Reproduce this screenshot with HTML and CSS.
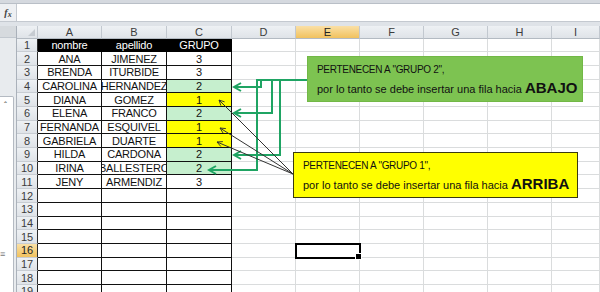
FILE: index.html
```html
<!DOCTYPE html>
<html lang="es">
<head>
  <meta charset="UTF-8">
  <title>Insertar filas por grupo</title>
  <link rel="stylesheet" href="styles.css">
</head>
<body>
<div class="app">
  <div class="ribbon-edge"></div>
  <div class="formula-bar">
    <div class="fx"><i>f</i><span>x</span></div>
    <div class="formula-input"></div>
  </div>
  <div class="bar-gap"></div>

  <div class="sheet">
    <div class="side-pane">
      <div class="side-top"></div>
      <div class="side-thumb"><span class="thumb-arrow">&#710;</span><span class="thumb-grip">&#8801;</span></div>
    </div>

    <div class="grid">
      <div class="ch corner"></div><div class="ch">A</div><div class="ch">B</div><div class="ch">C</div><div class="ch">D</div><div class="ch sel">E</div><div class="ch">F</div><div class="ch">G</div><div class="ch">H</div><div class="ch">I</div>

      <div class="rh">1</div><div class="c d hd">nombre</div><div class="c d hd">apellido</div><div class="c d hd">GRUPO</div><div class="c"></div><div class="c"></div><div class="c"></div><div class="c"></div><div class="c"></div><div class="c"></div>
      <div class="rh">2</div><div class="c d">ANA</div><div class="c d">JIMENEZ</div><div class="c d">3</div><div class="c"></div><div class="c"></div><div class="c"></div><div class="c"></div><div class="c"></div><div class="c"></div>
      <div class="rh">3</div><div class="c d">BRENDA</div><div class="c d">ITURBIDE</div><div class="c d">3</div><div class="c"></div><div class="c"></div><div class="c"></div><div class="c"></div><div class="c"></div><div class="c"></div>
      <div class="rh">4</div><div class="c d">CAROLINA</div><div class="c d">HERNANDEZ</div><div class="c d g">2</div><div class="c"></div><div class="c"></div><div class="c"></div><div class="c"></div><div class="c"></div><div class="c"></div>
      <div class="rh">5</div><div class="c d">DIANA</div><div class="c d">GOMEZ</div><div class="c d y">1</div><div class="c"></div><div class="c"></div><div class="c"></div><div class="c"></div><div class="c"></div><div class="c"></div>
      <div class="rh">6</div><div class="c d">ELENA</div><div class="c d">FRANCO</div><div class="c d g">2</div><div class="c"></div><div class="c"></div><div class="c"></div><div class="c"></div><div class="c"></div><div class="c"></div>
      <div class="rh">7</div><div class="c d">FERNANDA</div><div class="c d">ESQUIVEL</div><div class="c d y">1</div><div class="c"></div><div class="c"></div><div class="c"></div><div class="c"></div><div class="c"></div><div class="c"></div>
      <div class="rh">8</div><div class="c d">GABRIELA</div><div class="c d">DUARTE</div><div class="c d y">1</div><div class="c"></div><div class="c"></div><div class="c"></div><div class="c"></div><div class="c"></div><div class="c"></div>
      <div class="rh">9</div><div class="c d">HILDA</div><div class="c d">CARDONA</div><div class="c d g">2</div><div class="c"></div><div class="c"></div><div class="c"></div><div class="c"></div><div class="c"></div><div class="c"></div>
      <div class="rh">10</div><div class="c d">IRINA</div><div class="c d">BALLESTERO</div><div class="c d g">2</div><div class="c"></div><div class="c"></div><div class="c"></div><div class="c"></div><div class="c"></div><div class="c"></div>
      <div class="rh">11</div><div class="c d">JENY</div><div class="c d">ARMENDIZ</div><div class="c d">3</div><div class="c"></div><div class="c"></div><div class="c"></div><div class="c"></div><div class="c"></div><div class="c"></div>
      <div class="rh">12</div><div class="c d"></div><div class="c d"></div><div class="c d"></div><div class="c"></div><div class="c"></div><div class="c"></div><div class="c"></div><div class="c"></div><div class="c"></div>
      <div class="rh">13</div><div class="c d"></div><div class="c d"></div><div class="c d"></div><div class="c"></div><div class="c"></div><div class="c"></div><div class="c"></div><div class="c"></div><div class="c"></div>
      <div class="rh">14</div><div class="c d"></div><div class="c d"></div><div class="c d"></div><div class="c"></div><div class="c"></div><div class="c"></div><div class="c"></div><div class="c"></div><div class="c"></div>
      <div class="rh">15</div><div class="c d"></div><div class="c d"></div><div class="c d"></div><div class="c"></div><div class="c"></div><div class="c"></div><div class="c"></div><div class="c"></div><div class="c"></div>
      <div class="rh sel">16</div><div class="c d"></div><div class="c d"></div><div class="c d"></div><div class="c"></div><div class="c active"></div><div class="c"></div><div class="c"></div><div class="c"></div><div class="c"></div>
      <div class="rh">17</div><div class="c d"></div><div class="c d"></div><div class="c d"></div><div class="c"></div><div class="c"></div><div class="c"></div><div class="c"></div><div class="c"></div><div class="c"></div>
      <div class="rh">18</div><div class="c d"></div><div class="c d"></div><div class="c d"></div><div class="c"></div><div class="c"></div><div class="c"></div><div class="c"></div><div class="c"></div><div class="c"></div>
      <div class="rh">19</div><div class="c d"></div><div class="c d"></div><div class="c d"></div><div class="c"></div><div class="c"></div><div class="c"></div><div class="c"></div><div class="c"></div><div class="c"></div>
    </div>
  </div>

  <!-- callouts drawn over the sheet -->
  <div class="callout callout-green">
    <div class="callout-title">PERTENECEN A "GRUPO 2",</div>
    <div class="callout-body">por lo tanto se debe insertar una fila hacia <b class="callout-strong">ABAJO</b></div>
  </div>
  <div class="callout callout-yellow">
    <div class="callout-title">PERTENECEN A "GRUPO 1",</div>
    <div class="callout-body">por lo tanto se debe insertar una fila hacia <b class="callout-strong">ARRIBA</b></div>
  </div>

  <svg class="connectors" width="600" height="292" viewBox="0 0 600 292">
    <defs>
      <marker id="tipGreen" viewBox="0 0 10 10" refX="8" refY="5" markerWidth="10" markerHeight="10" orient="auto" markerUnits="userSpaceOnUse">
        <path d="M1 1L8 5L1 9" fill="none" stroke="#1fa463" stroke-width="2"/>
      </marker>
      <marker id="tipDark" viewBox="0 0 8 8" refX="7" refY="4" markerWidth="7" markerHeight="7" orient="auto" markerUnits="userSpaceOnUse">
        <path d="M1 1L7 4L1 7" fill="none" stroke="#333" stroke-width="1"/>
      </marker>
    </defs>
    <g fill="none" stroke="#1fa463" stroke-width="2" marker-end="url(#tipGreen)">
      <path d="M307 80H257V170H209"/>
      <path d="M261 80V87H234"/>
      <path d="M272 80V113H234"/>
      <path d="M280 80V155H234"/>
    </g>
    <g fill="none" stroke="#333" stroke-width="1" marker-end="url(#tipDark)">
      <path d="M293 174L219 100"/>
      <path d="M293 174L220 128"/>
      <path d="M293 174L217 142"/>
    </g>
  </svg>
</div>
</body>
</html>
```

FILE: styles.css
```css
* {
  margin: 0;
  padding: 0;
  box-sizing: border-box;
}

body {
  font-family: "Liberation Sans", Arial, sans-serif;
  background: #fff;
}

.app {
  position: relative;
  width: 600px;
  height: 292px;
  overflow: hidden;
  background: #fff;
}

.ribbon-edge {
  height: 4px;
  background: #d5d9df;
  border-bottom: 1px solid #b9bfc7;
}

.formula-bar {
  display: flex;
  height: 18px;
  border-bottom: 1px solid #c4c9d0;
}

.fx {
  width: 17px;
  display: flex;
  justify-content: center;
  align-items: center;
  background: #eef0f3;
  border-right: 1px solid #c4c9d0;
  font-family: "Liberation Serif", serif;
  font-size: 10px;
  font-weight: bold;
  color: #444;
}

.fx span {
  font-style: italic;
  font-size: 8px;
  margin-top: 3px;
}

.formula-input {
  flex: 1;
  background: #fff;
}

.bar-gap {
  height: 4px;
  background: #dfe3e8;
}

.sheet {
  display: flex;
}

.side-pane {
  width: 17px;
  background: #e8ebee;
  border-right: 1px solid #aab1ba;
}

.side-top {
  height: 12px;
  background: #d6dade;
  border-bottom: 1px solid #c2c8cf;
}

.side-thumb {
  position: relative;
  margin-top: 58px;
  width: 14px;
  height: 210px;
  background: #fff;
  border: 1px solid #b4bac2;
  border-left: none;
  border-radius: 0 2px 2px 0;
}

.thumb-arrow {
  position: absolute;
  top: 3px;
  left: 4px;
  font-size: 9px;
  color: #555;
}

.thumb-grip {
  position: absolute;
  top: 152px;
  left: 0;
  font-size: 9px;
  color: #777;
}

.grid {
  flex: 1;
  display: grid;
  grid-template-columns: 21px 64px 65px 65px 64px 64px 64px 64px 64px 1fr;
  grid-template-rows: 12.6px repeat(19, 13.7px);
}

.ch,
.rh {
  display: flex;
  justify-content: center;
  align-items: center;
  background: linear-gradient(#eef1f4, #dfe3e8);
  border-right: 1px solid #c2c8cf;
  border-bottom: 1px solid #b3bac2;
  font-size: 11px;
  color: #3c3c3c;
}

.rh {
  border-right-color: #2a2a2a;
  border-bottom-color: #c8cdd3;
}

.corner {
  position: relative;
}

.corner::after {
  content: "";
  position: absolute;
  right: 2px;
  bottom: 2px;
  border-left: 7px solid transparent;
  border-bottom: 7px solid #c6cbd1;
}

.sel {
  background: linear-gradient(#fae0a6, #f1c25e);
  color: #222;
}

.c {
  display: flex;
  justify-content: center;
  align-items: center;
  overflow: hidden;
  white-space: nowrap;
  border-right: 1px solid #dadcdd;
  border-bottom: 1px solid #dadcdd;
  font-size: 11px;
  letter-spacing: -0.2px;
  color: #111;
}

.d {
  border-right-color: #111;
  border-bottom-color: #111;
}

.hd {
  background: #000;
  color: #fff;
  border-color: #000;
}

.g {
  background: #c6efce;
}

.y {
  background: #ffff00;
}

.active {
  position: relative;
  overflow: visible;
  outline: 2px solid #000;
  outline-offset: -1px;
}

.active::after {
  content: "";
  position: absolute;
  right: -3px;
  bottom: -3px;
  width: 5px;
  height: 5px;
  background: #000;
  border: 1px solid #fff;
}

.callout {
  position: absolute;
  height: 46px;
  padding: 6px 9px 0;
  color: #111;
}

.callout-green {
  left: 307px;
  top: 56px;
  width: 276px;
  background: #7dc351;
  border: 1px solid #72b846;
}

.callout-yellow {
  left: 293px;
  top: 152px;
  width: 285px;
  background: #ffff00;
  border: 1px solid #3a3a10;
}

.callout-title {
  font-size: 10px;
  letter-spacing: -0.3px;
  line-height: 13px;
}

.callout-body {
  margin-top: 3px;
  font-size: 11px;
  line-height: 18px;
  white-space: nowrap;
}

.callout-strong {
  font-size: 15px;
}

.connectors {
  position: absolute;
  left: 0;
  top: 0;
  pointer-events: none;
}
```
